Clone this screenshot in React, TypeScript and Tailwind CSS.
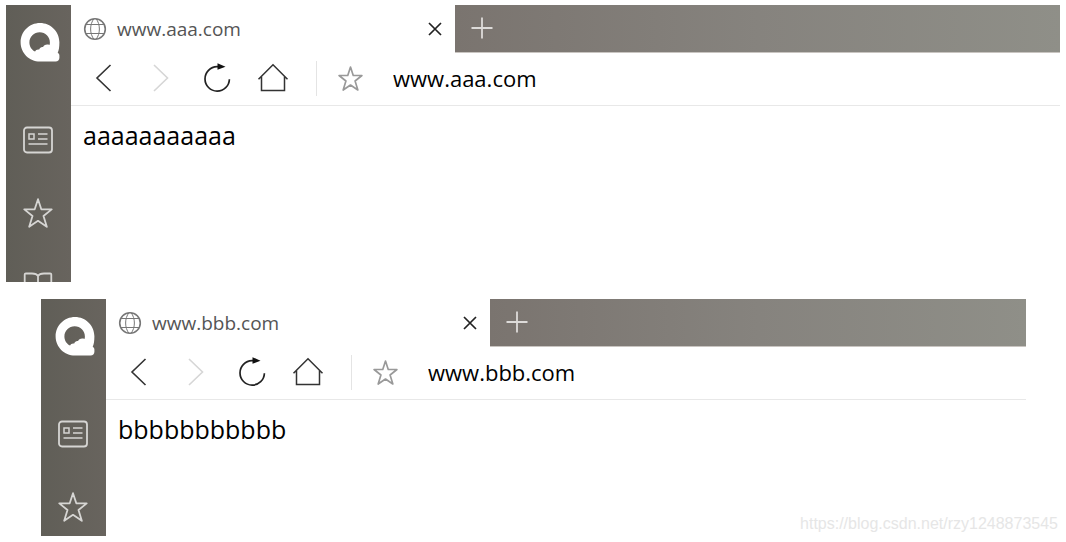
import { useState } from "react";
import type { ReactNode } from "react";

type IconProps = { className?: string };

function LogoIcon() {
  return (
    <svg viewBox="10 12 40 40" className="size-10" aria-hidden="true">
      <path
        fill="#fff"
        fillRule="evenodd"
        d="M30 12.9c-10.8 0-19.400 8.600-19.400 19.300 0 10.700 8.600 19.300 19.400 19.300h15.600c2.300 0 3.800-1.700 3.800-3.800v-2.300c0-1.200-.7-2-1.700-2.700 1.200-2.500 1.700-5.600 1.700-10.500 0-10.700-8.600-19.300-19.400-19.300ZM29.700 22.300c-5.700 0-10.300 4.500-10.300 10.100 0 4 2.300 7.400 5.700 9.100.6-1.600 2.200-2.300 4.100-1.900.6-2 2.100-2.800 3.900-2.500.6-2.100 3.200-3.100 6.400-2.200.3-.8.4-1.700.4-2.500 0-5.600-4.500-10.100-10.200-10.100Z"
      />
    </svg>
  );
}

function NewsIcon() {
  return (
    <svg viewBox="0 0 30 30" className="size-[30px]" fill="none" stroke="currentColor" aria-hidden="true">
      <rect x="1" y="2.500" width="28" height="25" rx="3" strokeWidth="1.800" />
      <rect x="6" y="9" width="5" height="5" strokeWidth="1.500" />
      <path d="M15 9h9.500M15 14h9.500M5.500 19h19" strokeWidth="1.500" />
    </svg>
  );
}

function StarIcon({ className }: IconProps) {
  return (
    <svg viewBox="0 0 30 30" className={className} fill="none" stroke="currentColor" strokeLinejoin="round" aria-hidden="true">
      <path d="M15 1.200 18.300 11.300 28.700 11.400 20.500 18 23.800 28.800 15 22.800 6.200 28.800 9.500 18 1.300 11.400 11.700 11.300Z" />
    </svg>
  );
}

function BookIcon() {
  return (
    <svg viewBox="0 0 30 30" className="size-[30px]" fill="none" stroke="currentColor" strokeWidth="1.800" aria-hidden="true">
      <path d="M15 5C14 3.200 12 2.500 9 2.500H2.800C2 2.500 1.700 3 1.700 3.500V25h8c2.800 0 4.300.8 5.300 2.500 1-1.700 2.500-2.500 5.300-2.500h8V3.500c0-.5-.3-1-1.100-1H21c-3 0-5 .7-6 2.500ZM15 5v22" />
    </svg>
  );
}

function GlobeIcon() {
  return (
    <svg viewBox="0 0 24 24" className="size-6 shrink-0 text-[#777]" fill="none" stroke="currentColor" aria-hidden="true">
      <circle cx="12" cy="12" r="10.300" strokeWidth="1.600" />
      <path d="M11 1.700C6.500 7 6.500 17 11 22.300M13 1.700C17.500 7 17.500 17 13 22.300M2.500 7.500h19M2.500 16.500h19" strokeWidth="1" />
    </svg>
  );
}

function ReloadIcon() {
  return (
    <svg viewBox="0 0 32 32" className="size-8" fill="none" aria-hidden="true">
      <path d="M18 4.700H16A12.200 12.200 0 1 0 28.400 17.200" stroke="#222" strokeWidth="1.700" />
      <path d="M16.500 1.200 24.500 4.700 16.500 7.800Z" fill="#111" />
    </svg>
  );
}

function HomeIcon() {
  return (
    <svg viewBox="0 0 32 32" className="size-8" fill="none" stroke="#333" strokeWidth="1.500" aria-hidden="true">
      <path d="M1.500 17.300 16 2.700 30.500 17.300M4.500 14.500V28.500H27.500V14.500" />
    </svg>
  );
}

function ToolButton({ label, disabled, children }: { label: string; disabled?: boolean; children: ReactNode }) {
  return (
    <button type="button" aria-label={label} disabled={disabled} className="flex size-8 shrink-0 items-center justify-center">
      {children}
    </button>
  );
}

function SideBar() {
  return (
    <nav aria-label="Side bar" className="flex w-[65px] shrink-0 flex-col overflow-hidden bg-linear-to-r from-[#605e57] to-[#68645e] pr-0.5 text-[#d6d5d3]">
      <button type="button" aria-label="Account" className="flex h-[98px] shrink-0 items-start justify-center pt-[17px] pl-1">
        <LogoIcon />
      </button>
      <button type="button" aria-label="News" className="flex h-[73px] shrink-0 items-center justify-center">
        <NewsIcon />
      </button>
      <button type="button" aria-label="Favourites" className="flex h-[73px] shrink-0 items-center justify-center">
        <StarIcon className="size-[30px] stroke-[1.8]" />
      </button>
      <button type="button" aria-label="Reading list" className="flex h-[73px] shrink-0 items-center justify-center">
        <BookIcon />
      </button>
    </nav>
  );
}

function BrowserWindow({ site, body, className }: { site: string; body: string; className: string }) {
  const [address, setAddress] = useState(site);
  return (
    <section aria-label={site} className={`flex overflow-hidden bg-white ${className}`}>
      <SideBar />
      <div className="flex min-w-0 flex-1 flex-col">
        <div className="flex h-12 shrink-0">
          <div className="flex w-96 shrink-0 items-center pr-1 pl-3">
            <GlobeIcon />
            <span className="ml-[10px] flex-1 text-[19px] leading-6 text-[#555]">{site}</span>
            <button type="button" aria-label="Close tab" className="flex size-8 items-center justify-center">
              <svg viewBox="0 0 14 14" className="size-[14px]" stroke="#222" strokeWidth="1.700" aria-hidden="true">
                <path d="M1 1 13 13M13 1 1 13" />
              </svg>
            </button>
          </div>
          <div className="flex flex-1 items-center border-b border-[#c9c5c1] bg-linear-to-r from-[#7a746f] via-[#86837e] to-[#8f8f88] pb-px pl-[11px]">
            <button type="button" aria-label="New tab" className="flex size-8 items-center justify-center">
              <svg viewBox="0 0 22 22" className="size-[22px]" stroke="#dddbd9" strokeWidth="1.800" aria-hidden="true">
                <path d="M11 .5V21.500M.5 11H21.500" />
              </svg>
            </button>
          </div>
        </div>
        <div className="flex h-[53px] shrink-0 items-center border-b border-[#e8e8e8] pb-0.5 pl-4">
          <ToolButton label="Back">
            <svg viewBox="0 0 32 32" className="size-8" fill="none" stroke="#333" strokeWidth="1.600" aria-hidden="true">
              <path d="M23.500 3 10 16 23.500 29" />
            </svg>
          </ToolButton>
          <div className="ml-[26px] flex gap-6">
            <ToolButton label="Forward" disabled>
              <svg viewBox="0 0 32 32" className="size-8" fill="none" stroke="#d6d6d6" strokeWidth="1.600" aria-hidden="true">
                <path d="M9 3 22.500 16 9 29" />
              </svg>
            </ToolButton>
            <ToolButton label="Reload">
              <ReloadIcon />
            </ToolButton>
            <ToolButton label="Home">
              <HomeIcon />
            </ToolButton>
          </div>
          <span className="mr-[17px] ml-[27px] h-[35px] w-px shrink-0 bg-[#e4e4e4]" />
          <ToolButton label="Add to favourites">
            <StarIcon className="size-[25px] stroke-2 text-[#999]" />
          </ToolButton>
          <input
            type="text"
            aria-label="Address"
            value={address}
            onChange={(e) => setAddress(e.target.value)}
            className="ml-[27px] min-w-0 flex-1 bg-transparent text-[22px] leading-7 text-black outline-none"
          />
        </div>
        <main className="px-3 pt-[11px] text-[25px] leading-9 text-black">{body}</main>
      </div>
    </section>
  );
}

export default function App() {
  return (
    <div className="relative flex flex-col gap-[17px] bg-white px-[6px] pt-[5px] pb-[6px] font-['Open_Sans','Noto_Sans',sans-serif]">
      <BrowserWindow site="www.aaa.com" body="aaaaaaaaaaa" className="h-[277px]" />
      <BrowserWindow site="www.bbb.com" body="bbbbbbbbbbb" className="mr-[34px] ml-[35px] h-[237px]" />
      <p className="absolute right-2 bottom-2 font-['Liberation_Sans',Arial,sans-serif] text-base leading-5 text-[#e6e6e6]">
        https://blog.csdn.net/rzy1248873545
      </p>
    </div>
  );
}
